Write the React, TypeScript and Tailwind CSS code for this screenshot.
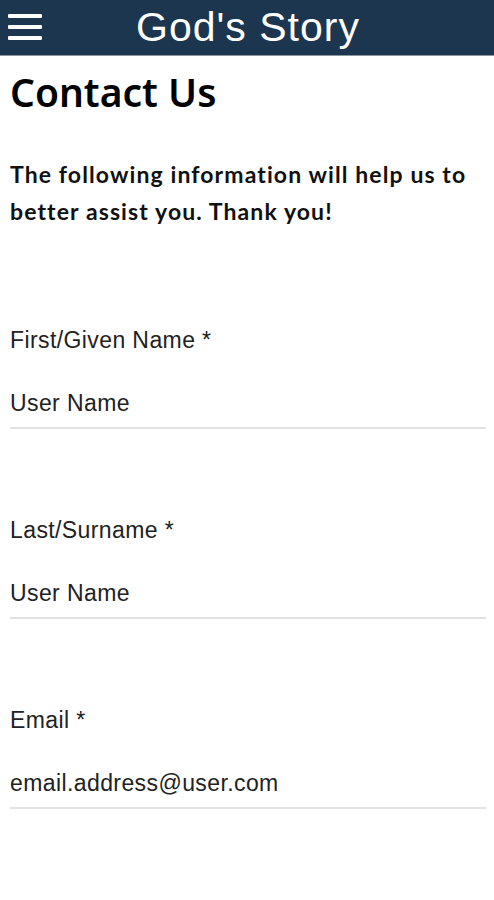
import React from "react";

function Field({ label, value }: { label: string; value: string }) {
  return (
    <div className="pt-[87px]">
      <div
        className="text-[23px] leading-[28px] tracking-[0.4px] text-[#222]"
        style={{ fontFamily: '"Liberation Sans", Arial, sans-serif' }}
      >
        {label}
      </div>
      <div
        className="mt-[35px] pb-[10px] border-b-2 border-[#e2e2e2] text-[23px] leading-[28px] tracking-[0.4px] text-[#222]"
        style={{ fontFamily: '"Liberation Sans", Arial, sans-serif' }}
      >
        {value}
      </div>
    </div>
  );
}

export default function App() {
  return (
    <div className="w-[494px] h-[900px] bg-white overflow-hidden">
      <header className="h-[56px] bg-[#1d3650] border-b-[1.5px] border-[#8a95a0] flex items-center relative">
        <div className="absolute left-[8px] top-[14px] flex flex-col gap-[7px]">
          <span className="block w-[34px] h-[4px] bg-white rounded-[1px]" />
          <span className="block w-[34px] h-[4px] bg-white rounded-[1px]" />
          <span className="block w-[34px] h-[4px] bg-white rounded-[1px]" />
        </div>
        <h1
          className="w-full text-center text-white text-[41px] leading-[55px] tracking-[1px] pl-[2px]"
          style={{ fontFamily: '"Liberation Sans", Arial, sans-serif' }}
        >
          God's Story
        </h1>
      </header>
      <main className="pl-[10px] pr-[8px]">
        <h2
          className="mt-[14px] text-[39px] leading-[44px] font-semibold text-black"
          style={{ fontFamily: '"Noto Sans", sans-serif' }}
        >
          Contact Us
        </h2>
        <p
          className="mt-[42px] text-[23px] leading-[37px] font-bold tracking-[1.1px] text-[#111]"
          style={{ fontFamily: 'Lato, sans-serif' }}
        >
          The following information will help us to better assist you. Thank you!
        </p>
        <div className="mt-[9px]">
          <Field label="First/Given Name *" value="User Name" />
          <Field label="Last/Surname *" value="User Name" />
          <Field label="Email *" value="email.address@user.com" />
        </div>
      </main>
    </div>
  );
}
